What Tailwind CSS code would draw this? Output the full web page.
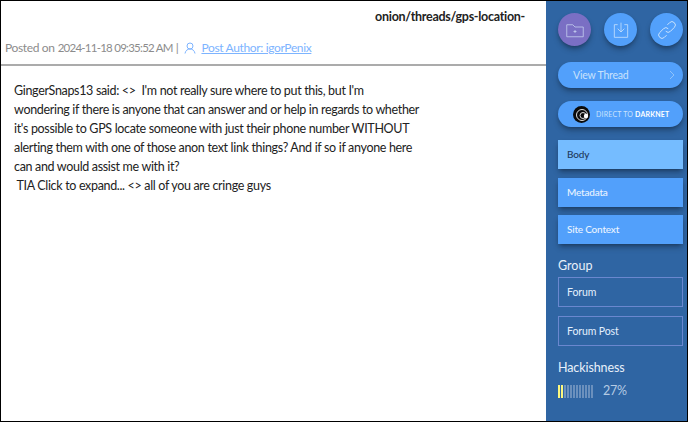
<!DOCTYPE html>
<html lang="en">
<head>
    <meta charset="UTF-8">
    <title>Post</title>
    <script src="https://cdn.jsdelivr.net/npm/@tailwindcss/browser@4"></script>
</head>
<body class="bg-black font-['Lato',sans-serif]">
    <div class="w-[688px] h-[422px] flex pt-px pb-px overflow-hidden">
        <!-- Post -->
        <main class="w-[545px] ml-px bg-white">
            <div class="h-[65px] border-b-2 border-[#ababab] relative">
                <p class="absolute right-[21px] top-[7px] text-[12.5px] leading-[18px] font-bold tracking-[-0.28px] text-[#222]">onion/threads/gps-location-</p>
                <div class="absolute left-[4px] top-[38px] flex items-center text-[12px] leading-[18px] tracking-[-0.35px] text-[#8c8c8c]">
                    <span>Posted on</span>
                    <span class="ml-[3px] text-[11.5px] tracking-[-0.75px]">2024-11-18 09:35:52 AM</span>
                    <span class="ml-[3px]">|</span>
                    <svg class="w-[12px] h-[12px] ml-[6px] mr-[4px]" fill="none" stroke="#7db4ff" stroke-width="2" viewBox="0 0 24 24">
                        <circle cx="12" cy="8" r="6"/>
                        <path d="M2 23c1-6 5-9 10-9s9 3 10 9"/>
                    </svg>
                    <a class="text-[#7db4ff] underline ml-[1px]" href="#">Post Author: igorPenix</a>
                </div>
            </div>
            <div class="pl-[13px] pt-[15px] text-[12.5px] leading-[19px] tracking-[-0.33px] text-[#222] whitespace-nowrap">
                <p>GingerSnaps13 said: &lt;&gt;&nbsp; I'm not really sure where to put this, but I'm</p>
                <p>wondering if there is anyone that can answer and or help in regards to whether</p>
                <p>it's possible to GPS locate someone with just their phone number WITHOUT</p>
                <p>alerting them with one of those anon text link things? And if so if anyone here</p>
                <p>can and would assist me with it?</p>
                <p>&nbsp;TIA Click to expand... &lt;&gt; all of you are cringe guys</p>
            </div>
        </main>

        <!-- Sidebar -->
        <aside class="w-[141px] bg-[#2f65a3] pl-[12px] pr-[4px] pt-[12px] text-white">
            <div class="flex justify-between">
                <div class="w-[33px] h-[33px] rounded-full bg-[#7a6fc4] flex items-center justify-center shadow-md shadow-black/30">
                    <svg class="w-[18px] h-[18px]" fill="none" stroke="#c9d6f2" stroke-width="1" viewBox="0 0 24 24">
                        <path d="M1 5h8l3 3h11v13H1z"/>
                        <path d="M12 12v4M10 14h4"/>
                    </svg>
                </div>
                <div class="w-[33px] h-[33px] rounded-full bg-[#52a0fb] flex items-center justify-center shadow-md shadow-black/30">
                    <svg class="w-[16px] h-[18px]" fill="none" stroke="#c9e2fc" stroke-width="1.2" viewBox="0 0 24 24">
                        <path d="M7 4H2v19h20V4h-5"/>
                        <path d="M12 1v14M7 10l5 5 5-5"/>
                    </svg>
                </div>
                <div class="w-[33px] h-[33px] rounded-full bg-[#52a0fb] flex items-center justify-center shadow-md shadow-black/30">
                    <svg class="w-[20px] h-[20px]" fill="none" stroke="#c9e2fc" stroke-width="1.2" viewBox="0 0 24 24">
                        <path d="M10.5 13.5a4 4 0 0 0 5.7 0l4.6-4.6a4 4 0 0 0-5.7-5.7l-2.6 2.6"/>
                        <path d="M13.5 10.5a4 4 0 0 0-5.7 0l-4.6 4.6a4 4 0 0 0 5.7 5.7l2.6-2.6"/>
                    </svg>
                </div>
            </div>

            <div class="mt-[16px] h-[26px] rounded-full bg-[#52a0fb] flex items-center justify-between pl-[15px] pr-[7px] shadow-md shadow-black/30">
                <span class="pt-[2px] text-[10.5px] tracking-[-0.2px] text-[#c9e2fc]">View Thread</span>
                <svg class="w-[8px] h-[10px]" fill="none" stroke="#8fc3fb" stroke-width="1" viewBox="0 0 8 10">
                    <path d="M2 1l4 4-4 4"/>
                </svg>
            </div>
            <div class="mt-[13px] h-[26px] rounded-full bg-[#52a0fb] flex items-center pl-[15px] shadow-md shadow-black/30">
                <svg class="w-[17px] h-[17px]" viewBox="0 0 17 17">
                    <circle cx="8.5" cy="8.5" r="8.5" fill="#0b0b0b"/>
                    <circle cx="9" cy="9" r="5.5" fill="none" stroke="#ddd" stroke-width="1"/>
                    <circle cx="10" cy="9.5" r="3" fill="none" stroke="#ddd" stroke-width="1"/>
                    <circle cx="13" cy="10" r="2.2" fill="#fff"/>
                </svg>
                <span class="ml-[6px] text-[7px] tracking-[0.2px] text-[#c9e2fc]">DIRECT TO <b class="font-bold text-white">DARKNET</b></span>
            </div>

            <div class="mt-[13px] h-[29px] bg-[#75bcff] flex items-center pl-[9px] text-[10px] tracking-[-0.2px] font-medium text-[#1f3a5c] shadow-md shadow-black/30">Body</div>
            <div class="mt-[9px] h-[29px] bg-[#52a0fb] flex items-center pl-[9px] text-[10px] tracking-[-0.2px] font-medium text-[#e9f3ff] shadow-md shadow-black/30">Metadata</div>
            <div class="mt-[8px] h-[29px] bg-[#52a0fb] flex items-center pl-[9px] text-[10px] tracking-[-0.2px] font-medium text-[#e9f3ff] shadow-md shadow-black/30">Site Context</div>

            <h3 class="mt-[13px] text-[12.5px] leading-[18px] text-[#e8f0fa]">Group</h3>
            <div class="mt-[2px] h-[30px] pt-[2px] border border-[#6a87cf] flex items-center pl-[8px] text-[10.5px] tracking-[-0.1px] text-[#e3f0fe]">Forum</div>
            <div class="mt-[9px] h-[30px] pt-[2px] border border-[#6a87cf] flex items-center pl-[8px] text-[10.5px] tracking-[-0.1px] text-[#e3f0fe]">Forum Post</div>

            <h3 class="mt-[13px] text-[12.5px] leading-[18px] tracking-[-0.1px] text-[#e8f0fa]">Hackishness</h3>
            <div class="mt-[5px] flex items-center">
                <div class="flex gap-px h-[13px]">
                    <span class="w-[2px] bg-[#fbf77f]"></span>
                    <span class="w-[2px] bg-[#fbf77f]"></span>
                    <span class="w-[2px] bg-[#6b90bd]"></span>
                    <span class="w-[2px] bg-[#6b90bd]"></span>
                    <span class="w-[2px] bg-[#6b90bd]"></span>
                    <span class="w-[2px] bg-[#6b90bd]"></span>
                    <span class="w-[2px] bg-[#6b90bd]"></span>
                    <span class="w-[2px] bg-[#6b90bd]"></span>
                    <span class="w-[2px] bg-[#6b90bd]"></span>
                    <span class="w-[2px] bg-[#6b90bd]"></span>
                    <span class="w-[2px] bg-[#6b90bd]"></span>
                    <span class="w-[2px] bg-[#6b90bd]"></span>
                </div>
                <span class="ml-[10px] text-[12.5px] tracking-[-0.3px] text-[#b5cbe4]">27%</span>
            </div>
        </aside>
    </div>
</body>
</html>
